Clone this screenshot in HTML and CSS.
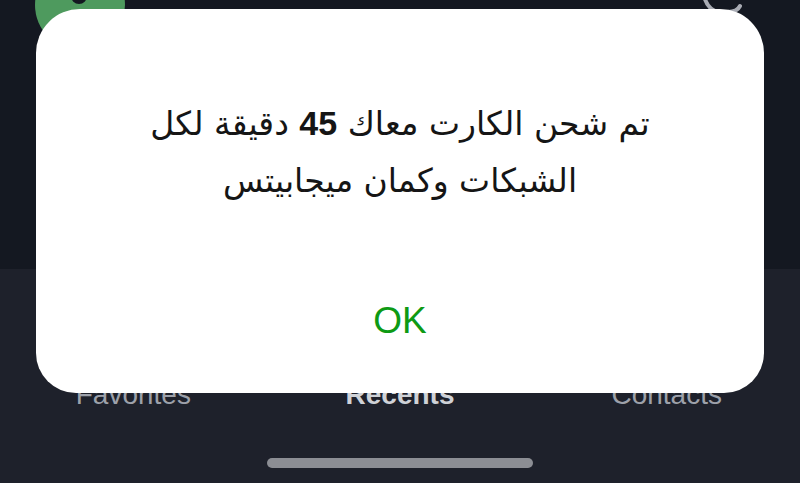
FILE: index.html
```html
<!DOCTYPE html>
<html>
<head>
    <meta charset="UTF-8">
    <meta name="viewport" content="width=device-width, initial-scale=1.0">
    <title>Recents</title>
    <link rel="stylesheet" href="styles.css">
</head>
<body>
    <div class="screen">
        <div class="header">
            <div class="avatar"><span class="avatar-mark"></span></div>
            <div class="header-icon">
                <svg width="44" height="24" viewBox="0 0 44 24">
                    <path d="M4 -4 C6 4 10 10 18 12 L28 12 C33 12 38 10 40 6" fill="none" stroke="#a9acb4" stroke-width="4" stroke-linecap="round"/>
                </svg>
            </div>
        </div>
        <div class="tabbar">
            <div class="tabs">
                <div class="tab">Favorites</div>
                <div class="tab active">Recents</div>
                <div class="tab">Contacts</div>
            </div>
            <div class="home-bar"></div>
        </div>

        <div class="dialog">
            <p class="dialog-text" dir="rtl">تم شحن الكارت معاك <b class="num">45</b> دقيقة لكل<br>الشبكات وكمان ميجابيتس</p>
            <button class="dialog-btn">OK</button>
        </div>
    </div>
</body>
</html>
```

FILE: styles.css
```css
body {
    margin: 0;
    padding: 0;
    background-color: #1e212b;
    font-family: "Liberation Sans", Arial, sans-serif;
}
.screen {
    position: relative;
    width: 800px;
    height: 483px;
    overflow: hidden;
    display: flex;
    flex-direction: column;
}
.header {
    position: relative;
    height: 269px;
    background-color: #141821;
}
.avatar {
    position: absolute;
    left: 35px;
    top: -40px;
    width: 90px;
    height: 90px;
    border-radius: 50%;
    background-color: #4e9a5e;
}
.avatar-mark {
    position: absolute;
    left: 36px;
    top: 34px;
    width: 16px;
    height: 10px;
    border-radius: 0 0 8px 8px;
    background-color: #141821;
}
.header-icon {
    position: absolute;
    right: 56px;
    top: 0;
}
.tabbar {
    flex: 1;
    display: flex;
    flex-direction: column;
    align-items: center;
    background-color: #1e212b;
}
.tabs {
    display: flex;
    width: 100%;
    padding-top: 110px;
}
.tab {
    flex: 1;
    text-align: center;
    font-size: 28px;
    line-height: 32px;
    color: #9da1aa;
}
.tab.active {
    font-weight: bold;
    color: #cfd2d7;
}
.home-bar {
    margin-top: 47px;
    width: 266px;
    height: 10px;
    border-radius: 5px;
    background-color: #8c8e94;
}
.dialog {
    position: absolute;
    left: 36px;
    top: 9px;
    width: 728px;
    height: 384px;
    box-sizing: border-box;
    background: #fff;
    border-radius: 44px 44px 40px 40px;
    display: flex;
    flex-direction: column;
    align-items: center;
    padding: 86px 60px 0;
}
.dialog-text {
    margin: 0;
    text-align: center;
    font-family: "DejaVu Sans", sans-serif;
    font-size: 33px;
    line-height: 57px;
    color: #151515;
}
.num {
    font-family: "Liberation Sans", Arial, sans-serif;
    font-size: 34px;
}
.dialog-btn {
    margin-top: 92px;
    background: none;
    border: none;
    padding: 0;
    font-family: "Liberation Sans", Arial, sans-serif;
    font-size: 37px;
    line-height: 40px;
    color: #0e9a14;
    cursor: pointer;
}
```
